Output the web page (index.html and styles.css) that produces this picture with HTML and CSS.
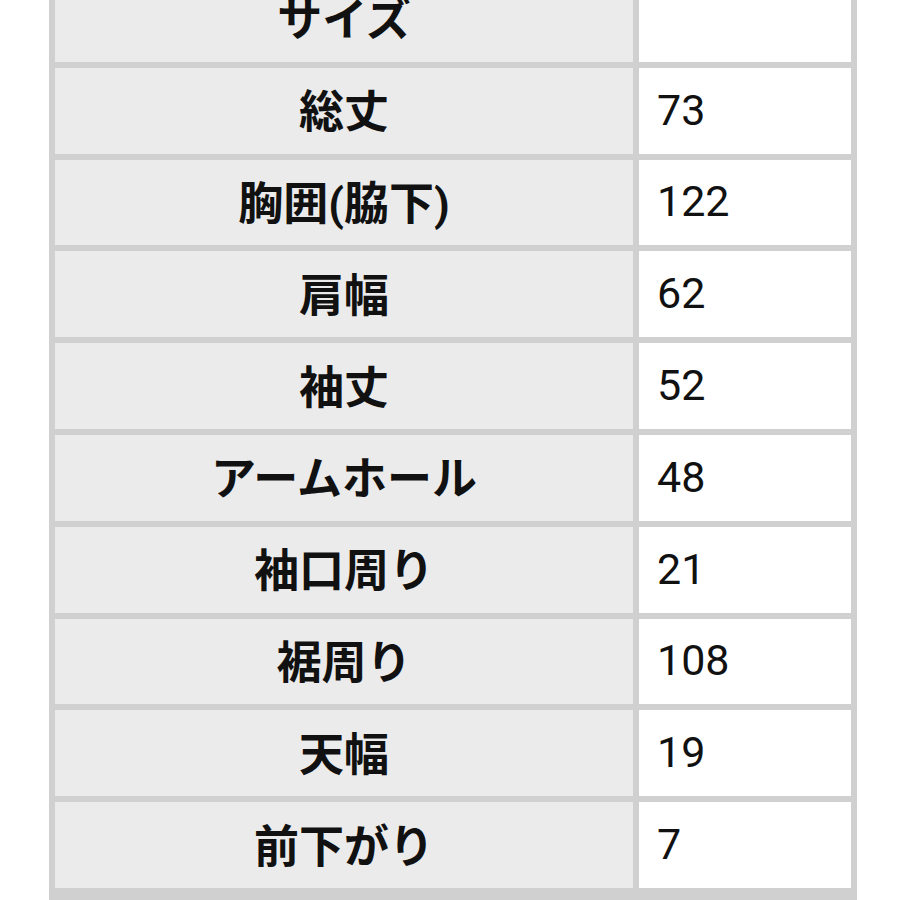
FILE: index.html
```html
<!DOCTYPE html>
<html lang="ja">
<head>
<meta charset="utf-8">
<title>サイズ</title>
<link rel="stylesheet" href="styles.css">
</head>
<body>
<div class="sheet">
  <div class="label">サイズ</div><div class="value"></div>
  <div class="label">総丈</div><div class="value">73</div>
  <div class="label">胸囲(脇下)</div><div class="value">122</div>
  <div class="label">肩幅</div><div class="value">62</div>
  <div class="label">袖丈</div><div class="value">52</div>
  <div class="label">アームホール</div><div class="value">48</div>
  <div class="label">袖口周り</div><div class="value">21</div>
  <div class="label">裾周り</div><div class="value">108</div>
  <div class="label">天幅</div><div class="value">19</div>
  <div class="label">前下がり</div><div class="value">7</div>
</div>
</body>
</html>
```

FILE: styles.css
```css
html, body {
  margin: 0;
  padding: 0;
  background: #ffffff;
  overflow: hidden;
}

.sheet {
  display: grid;
  grid-template-columns: 578px 212px;
  grid-auto-rows: 85.8px;
  gap: 6px;
  padding: 6px 6px 30px 6px;
  width: max-content;
  margin: -30px 0 0 49px;
  background: #d0d0d0;
  font-family: Roboto, "Noto Sans CJK JP", sans-serif;
  color: #111111;
}

.label {
  background: #ebebeb;
  display: flex;
  align-items: center;
  justify-content: center;
  font-size: 45px;
  font-weight: 700;
  padding-bottom: 4px;
  box-sizing: border-box;
}

.value {
  background: #ffffff;
  display: flex;
  align-items: center;
  padding-left: 18px;
  padding-bottom: 2px;
  box-sizing: border-box;
  font-size: 43px;
  font-weight: 400;
}
```
